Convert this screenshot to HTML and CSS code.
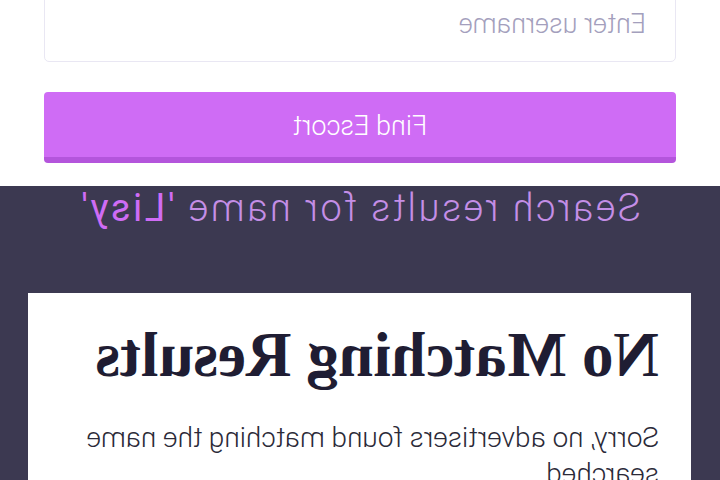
FILE: index.html
```html
<!DOCTYPE html>
<html lang="en">

<head>
    <meta charset="UTF-8">
    <meta name="viewport" content="width=device-width, initial-scale=1.0">
    <title>Find Escort</title>
    <link rel="stylesheet" href="styles.css">
</head>

<body>
    <div class="page">
        <form class="search-form">
            <input class="search-input" type="text" placeholder="Enter username">
            <button class="search-btn" type="submit">Find Escort</button>
        </form>
        <div class="results">
            <h2 class="results-title">Search results for name <span class="query">'Lisy'</span></h2>
            <div class="card">
                <h1>No Matching Results</h1>
                <p>Sorry, no advertisers found matching the name searched</p>
            </div>
        </div>
    </div>
</body>
</html>
```

FILE: styles.css
```css
body {
    margin: 0;
    font-family: Roboto, "Liberation Sans", sans-serif;
    background-color: #3c3951;
    overflow: hidden;
}

.page {
    transform: scaleX(-1);
}

.search-form {
    background-color: #ffffff;
    padding: 0 44px 23px 44px;
    margin-top: -14px;
    display: flex;
    flex-direction: column;
    gap: 30px;
}

.search-input {
    height: 76px;
    border: 1px solid #e9e7f3;
    border-radius: 5px;
    padding: 0 29px;
    font-family: Roboto, sans-serif;
    font-size: 27px;
    font-weight: 300;
    color: #333;
    box-sizing: border-box;
}

.search-input::placeholder {
    color: #a49fbd;
}

.search-btn {
    height: 71px;
    background-color: #cf6cf5;
    border: none;
    border-bottom: 6px solid #b455dc;
    border-radius: 4px;
    color: #ffffff;
    font-family: Roboto, sans-serif;
    font-size: 27px;
    font-weight: 300;
    padding-top: 4px;
    cursor: pointer;
}

.results {
    padding: 0 28px 0 29px;
}

.results-title {
    margin: 0;
    text-align: center;
    font-size: 38px;
    line-height: 44px;
    font-weight: 300;
    letter-spacing: 2.5px;
    color: #c48ee6;
}

.results-title .query {
    color: #cf6cf5;
    font-weight: 400;
}

.card {
    margin-top: 63px;
    background-color: #ffffff;
    padding: 26px 32px;
}

.card h1 {
    margin: 0 0 28px 0;
    font-family: "Liberation Serif", serif;
    font-size: 63px;
    font-weight: bold;
    color: #1f1d33;
}

.card p {
    margin: 0;
    font-size: 28px;
    font-weight: 300;
    line-height: 36px;
    color: #2b2a38;
}
```
